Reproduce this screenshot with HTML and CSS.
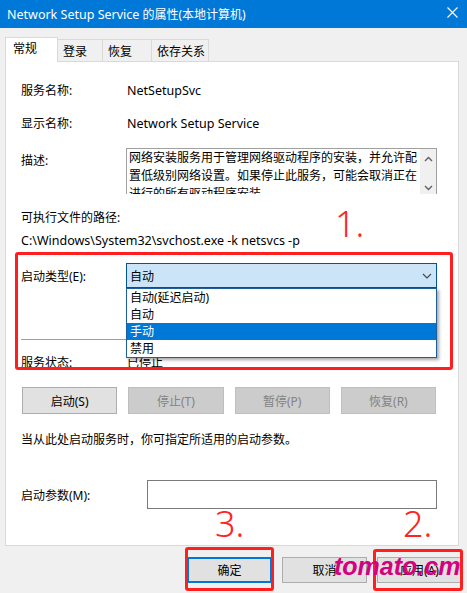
FILE: index.html
```html
<!DOCTYPE html>
<html>
<head>
    <meta charset="utf-8">
    <title>Network Setup Service 的属性(本地计算机)</title>
    <link rel="stylesheet" href="styles.css">
</head>
<body>
<div class="window">
    <div class="titlebar">
        <span class="title"><span class="latin">Network Setup Service</span> 的属性(本地计算机)</span>
        <svg class="close-icon" width="11" height="11" viewBox="0 0 11 11">
            <path d="M0.5 0.5 L10.5 10.5 M10.5 0.5 L0.5 10.5" stroke="#fff" stroke-width="1.1" fill="none"/>
        </svg>
    </div>

    <div class="tabs">
        <div class="tab active">常规</div>
        <div class="tab tab-login">登录</div>
        <div class="tab tab-recover">恢复</div>
        <div class="tab tab-deps">依存关系</div>
    </div>

    <div class="panel">
        <div class="field first">
            <span class="label">服务名称:</span>
            <span class="value latin">NetSetupSvc</span>
        </div>
        <div class="field gap13">
            <span class="label">显示名称:</span>
            <span class="value latin">Network Setup Service</span>
        </div>
        <div class="field field-desc">
            <span class="label">描述:</span>
            <div class="desc-box">
                <div class="desc-text">网络安装服务用于管理网络驱动程序的安装，并允许配置低级别网络设置。如果停止此服务，可能会取消正在进行的所有驱动程序安装。</div>
                <div class="desc-scroll">
                    <svg width="9" height="6" viewBox="0 0 9 6"><path d="M1 5 L4.5 1.5 L8 5" stroke="#606060" stroke-width="1.4" fill="none"/></svg>
                    <svg width="9" height="6" viewBox="0 0 9 6"><path d="M1 1 L4.5 4.5 L8 1" stroke="#606060" stroke-width="1.4" fill="none"/></svg>
                </div>
            </div>
        </div>
        <div class="field gap13">可执行文件的路径:</div>
        <div class="field gap3 latin">C:\Windows\System32\svchost.exe -k netsvcs -p</div>

        <div class="field field-select gap13">
            <span class="label">启动类型(E):</span>
            <div class="select-wrap">
                <div class="select">
                    <span>自动</span>
                    <svg width="10" height="6" viewBox="0 0 10 6"><path d="M1 1 L5 5 L9 1" stroke="#444" stroke-width="1.1" fill="none"/></svg>
                </div>
                <div class="dropdown">
                    <div class="option">自动(延迟启动)</div>
                    <div class="option">自动</div>
                    <div class="option selected">手动</div>
                    <div class="option">禁用</div>
                </div>
            </div>
        </div>

        <div class="divider"></div>

        <div class="field gap12">
            <span class="label">服务状态:</span>
            <span class="value">已停止</span>
        </div>

        <div class="actions">
            <button class="btn">启动(S)</button>
            <button class="btn disabled">停止(T)</button>
            <button class="btn disabled">暂停(P)</button>
            <button class="btn disabled">恢复(R)</button>
        </div>

        <div class="field gap15">当从此处启动服务时，你可指定所适用的启动参数。</div>

        <div class="field field-param">
            <span class="label label-wide">启动参数(M):</span>
            <div class="param-input"></div>
        </div>
    </div>

    <div class="footer">
        <button class="btn btn-footer default">确定</button>
        <button class="btn btn-footer">取消</button>
        <button class="btn btn-footer">应用(A)</button>
    </div>

    <!-- 标注 -->
    <div class="mark mark-1"></div>
    <div class="mark mark-3"></div>
    <div class="mark mark-2"></div>
    <span class="step step-1">1.</span>
    <span class="step step-3">3.</span>
    <span class="step step-2">2.</span>
    <span class="watermark">tomato.cm</span>
</div>
</body>
</html>
```

FILE: styles.css
```css
body {
    margin: 0;
    background-color: #f0f0f0;
    font-family: "Noto Sans", "Noto Sans CJK SC", sans-serif;
    font-size: 12px;
    color: #000;
}

.window {
    position: relative;
    width: 467px;
    height: 593px;
    overflow: hidden;
}

.latin {
    font-size: 12.5px;
}

/* 标题栏 */
.titlebar {
    height: 28px;
    background-color: #0078d7;
    color: #fff;
    display: flex;
    align-items: center;
    justify-content: space-between;
    padding: 0 9px 0 7px;
}

.close-icon {
    margin-bottom: 3px;
}

/* 选项卡 */
.tabs {
    display: flex;
    align-items: flex-end;
    height: 24px;
    margin-top: 9px;
    padding-left: 5px;
}

.tab {
    box-sizing: border-box;
    height: 22px;
    padding: 2px 0 0 5px;
    line-height: 20px;
    border: 1px solid #d9d9d9;
    border-bottom: none;
    margin-left: -1px;
    background-color: #f0f0f0;
}

.tab.active {
    position: relative;
    z-index: 1;
    width: 53px;
    height: 25px;
    margin: 0 0 -1px 0;
    padding: 1px 0 0 7px;
    background-color: #fff;
}

.tab-login { width: 46px; }
.tab-recover { width: 50px; }
.tab-deps { width: 58px; }

/* 主面板 */
.panel {
    box-sizing: border-box;
    height: 485px;
    margin: 0 8px 0 5px;
    padding: 18px 21px 0 15px;
    border: 1px solid #d9d9d9;
    background-color: #fff;
}

.field {
    display: flex;
    align-items: center;
    height: 20px;
    white-space: nowrap;
}

.field .label {
    width: 105px;
    flex: none;
}

.field .value {
    padding-left: 1px;
}

.gap3 { margin-top: 3px; }
.gap12 { margin-top: 12px; }
.gap13 { margin-top: 13px; }
.gap15 { margin-top: 15px; }

.field-desc {
    align-items: flex-start;
    height: auto;
    margin-top: 15px;
}

.field-desc .label {
    margin-top: 3px;
    line-height: 20px;
}

.desc-box {
    flex: 1;
    display: flex;
    box-sizing: border-box;
    height: 46px;
    border: 1px solid #a0a0a0;
    border-bottom: none;
    overflow: hidden;
}

.desc-text {
    flex: 1;
    padding-left: 2px;
    line-height: 18px;
    white-space: normal;
}

.desc-scroll {
    width: 16px;
    background-color: #f0f0f0;
    display: flex;
    flex-direction: column;
    justify-content: space-between;
    align-items: center;
    padding: 7px 0 3px;
}

/* 启动类型下拉框 */
.field-select {
    height: 25px;
}

.select-wrap {
    position: relative;
    flex: 1;
}

.select {
    box-sizing: border-box;
    height: 25px;
    border: 1px solid #005499;
    background-color: #cce4f7;
    display: flex;
    align-items: center;
    justify-content: space-between;
    padding: 0 4px 0 3px;
}

.dropdown {
    position: absolute;
    z-index: 2;
    top: 25px;
    left: 0;
    right: 0;
    border: 1px solid #1f5f99;
    background-color: #fff;
    box-shadow: 2px 2px 3px rgba(0, 0, 0, 0.35);
}

.option {
    height: 17px;
    line-height: 17px;
    padding-left: 3px;
}

.option.selected {
    background-color: #0078d7;
    color: #fff;
}

.divider {
    height: 1px;
    margin-top: 51px;
    background-color: #a0a0a0;
}

/* 按钮 */
.actions {
    display: grid;
    grid-template-columns: repeat(4, 1fr);
    gap: 11px;
    margin-top: 15px;
    padding: 0 1px;
}

.btn {
    box-sizing: border-box;
    height: 27px;
    border: 1px solid #adadad;
    background-color: #e1e1e1;
    font-family: inherit;
    font-size: 12px;
    color: #000;
    padding: 0;
}

.btn.disabled {
    background-color: #cccccc;
    border-color: #bfbfbf;
    color: #838383;
}

.field-param {
    height: 29px;
    margin-top: 31px;
}

.field .label-wide {
    width: 126px;
}

.param-input {
    flex: 1;
    box-sizing: border-box;
    height: 29px;
    border: 1px solid #7a7a7a;
}

/* 底部按钮 */
.footer {
    display: flex;
    justify-content: flex-end;
    gap: 10px;
    margin-top: 11px;
    padding-right: 5px;
}

.btn-footer {
    width: 85px;
    height: 26px;
}

.btn-footer.default {
    border: 2px solid #0078d7;
}

/* 红色标注 */
.mark {
    position: absolute;
    box-sizing: border-box;
    border: 3px solid #ff1f1f;
    border-radius: 3px;
}

.mark-1 { left: 15px; top: 252px; width: 438px; height: 118px; }
.mark-3 { left: 185px; top: 547px; width: 89px; height: 44px; }
.mark-2 { left: 373px; top: 549px; width: 90px; height: 42px; }

.step {
    position: absolute;
    font-size: 36px;
    font-weight: 300;
    line-height: 1;
    color: #ff2323;
}

.step-1 { left: 335px; top: 206px; }
.step-3 { left: 215px; top: 506px; }
.step-2 { left: 403px; top: 506px; }

.watermark {
    position: absolute;
    left: 334px;
    top: 554px;
    font-family: "Liberation Sans", sans-serif;
    font-size: 25px;
    font-weight: bold;
    font-style: italic;
    line-height: 1;
    color: #d6007d;
}
```
